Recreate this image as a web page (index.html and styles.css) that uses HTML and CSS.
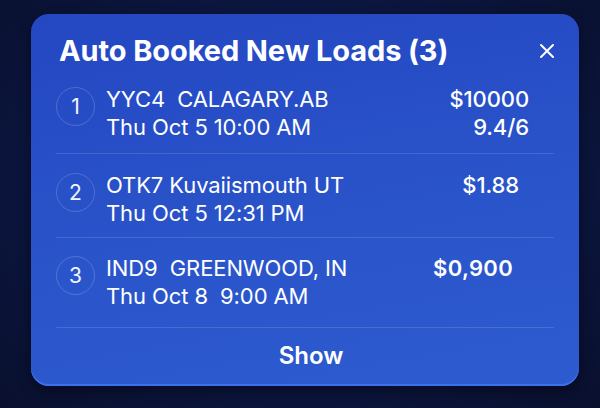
FILE: index.html
```html
<!DOCTYPE html>
<html>
<head>
<meta charset="utf-8">
<link rel="stylesheet" href="styles.css">
</head>
<body>
<div class="card">
  <div class="header">
    <h1 class="title">Auto Booked New Loads (3)</h1>
    <span class="close">
      <svg width="16" height="16" viewBox="0 0 16 16"><path d="M2 2 L14 14 M14 2 L2 14" stroke="#fff" stroke-width="2" stroke-linecap="round"/></svg>
    </span>
  </div>
  <div class="list">
    <div class="row row-1">
      <div class="num">1</div>
      <div class="info">
        <div class="line">YYC4&nbsp; CALAGARY.AB</div>
        <div class="line">Thu Oct 5 10:00 AM</div>
      </div>
      <div class="price price-1">
        <div class="line">$10000</div>
        <div class="line">9.4/6</div>
      </div>
    </div>
    <div class="row row-2">
      <div class="num">2</div>
      <div class="info">
        <div class="line">OTK7 Kuvaiismouth UT</div>
        <div class="line">Thu Oct 5 12:31 PM</div>
      </div>
      <div class="price price-2">
        <div class="line">$1.88</div>
      </div>
    </div>
    <div class="row row-3">
      <div class="num">3</div>
      <div class="info">
        <div class="line">IND9&nbsp; GREENWOOD, IN</div>
        <div class="line">Thu Oct 8&nbsp; 9:00 AM</div>
      </div>
      <div class="price price-3">
        <div class="line">$0,900</div>
      </div>
    </div>
  </div>
  <div class="footer">Show</div>
</div>
</body>
</html>
```
FILE: styles.css
```css
html, body {
  margin: 0;
  padding: 0;
}
body {
  width: 600px;
  height: 408px;
  overflow: hidden;
  background: radial-gradient(ellipse at 50% 45%, #13215a 0%, #0c1640 55%, #09102e 100%);
  font-family: Inter, "Noto Sans", sans-serif;
  color: #fff;
  padding-top: 14px;
  box-sizing: border-box;
}
.card {
  margin-left: 31px;
  width: 548px;
  height: 372px;
  box-sizing: border-box;
  border-radius: 18px;
  background: linear-gradient(170deg, #2447c2 0%, #2a54ca 55%, #2e5bcf 100%);
  box-shadow: inset 0 -2px 0 #3d6ff0, 0 4px 14px rgba(0,0,0,0.45);
  display: flex;
  flex-direction: column;
}
.header {
  display: flex;
  align-items: center;
  justify-content: space-between;
  padding: 22px 24px 0 28px;
  height: 52px;
  box-sizing: border-box;
}
.title {
  margin: 0;
  font-size: 29px;
  font-weight: 700;
  letter-spacing: -0.1px;
  line-height: 32px;
}
.close {
  display: flex;
  width: 16px;
  height: 16px;
}
.list {
  margin: 0 25px;
}
.row {
  display: grid;
  grid-template-columns: 39px 1fr auto;
  column-gap: 11px;
  align-items: start;
  border-bottom: 1px solid rgba(255,255,255,0.13);
}
.row-1 { padding: 19px 0 12px; }
.row-2 { padding: 17px 0 10px; }
.row-3 { padding: 16px 0 17px; }
.num {
  width: 39px;
  height: 39px;
  box-sizing: border-box;
  border: 1px solid rgba(255,255,255,0.18);
  border-radius: 50%;
  display: flex;
  align-items: center;
  justify-content: center;
  font-size: 21px;
  font-weight: 400;
  margin-top: 2px;
  color: #f2f5ff;
}
.line {
  font-size: 22px;
  line-height: 28px;
  white-space: nowrap;
  letter-spacing: -0.1px;
}
.price {
  text-align: right;
  font-weight: 500;
}
.price-1 { margin-right: 25px; }
.price-2 { margin-right: 35px; }
.price-3 { margin-right: 41px; }
.price-3 .line {
  font-size: 22px;
  font-weight: 600;
  letter-spacing: 0.3px;
}
.footer {
  flex: 1;
  display: flex;
  align-items: center;
  justify-content: center;
  font-size: 24px;
  font-weight: 600;
  padding: 0 0 4px 12px;
  margin: 0 -8px;
}
```
